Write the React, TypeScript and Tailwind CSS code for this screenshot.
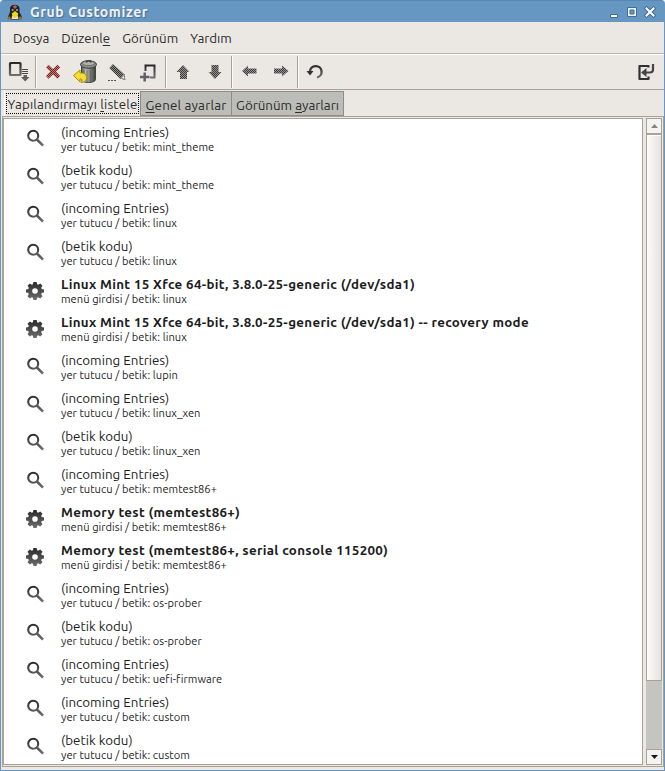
import React from "react";

type Entry = { kind: "placeholder" | "menu"; title: string; script: string };

const entries: Entry[] = [
  { kind: "placeholder", title: "(incoming Entries)", script: "mint_theme" },
  { kind: "placeholder", title: "(betik kodu)", script: "mint_theme" },
  { kind: "placeholder", title: "(incoming Entries)", script: "linux" },
  { kind: "placeholder", title: "(betik kodu)", script: "linux" },
  { kind: "menu", title: "Linux Mint 15 Xfce 64-bit, 3.8.0-25-generic (/dev/sda1)", script: "linux" },
  { kind: "menu", title: "Linux Mint 15 Xfce 64-bit, 3.8.0-25-generic (/dev/sda1) -- recovery mode", script: "linux" },
  { kind: "placeholder", title: "(incoming Entries)", script: "lupin" },
  { kind: "placeholder", title: "(incoming Entries)", script: "linux_xen" },
  { kind: "placeholder", title: "(betik kodu)", script: "linux_xen" },
  { kind: "placeholder", title: "(incoming Entries)", script: "memtest86+" },
  { kind: "menu", title: "Memory test (memtest86+)", script: "memtest86+" },
  { kind: "menu", title: "Memory test (memtest86+, serial console 115200)", script: "memtest86+" },
  { kind: "placeholder", title: "(incoming Entries)", script: "os-prober" },
  { kind: "placeholder", title: "(betik kodu)", script: "os-prober" },
  { kind: "placeholder", title: "(incoming Entries)", script: "uefi-firmware" },
  { kind: "placeholder", title: "(incoming Entries)", script: "custom" },
  { kind: "placeholder", title: "(betik kodu)", script: "custom" },
];

/* Gradients and the stipple mask shared by all icons */
function Defs() {
  return (
    <svg className="absolute h-0 w-0" aria-hidden="true">
      <defs>
        <pattern id="stipple" width="2" height="2" patternUnits="userSpaceOnUse">
          <rect width="2" height="2" fill="#fff" />
          <rect width="1" height="1" fill="#808080" />
          <rect x="1" y="1" width="1" height="1" fill="#808080" />
        </pattern>
        <mask id="insensitive" maskUnits="userSpaceOnUse" x="0" y="0" width="32" height="32">
          <rect width="32" height="32" fill="url(#stipple)" />
        </mask>
        <linearGradient id="dark" x1="0" y1="0" x2="0" y2="1">
          <stop offset="0" stopColor="#2a2a2a" />
          <stop offset="1" stopColor="#6e6e6e" />
        </linearGradient>
        <linearGradient id="glass" gradientUnits="userSpaceOnUse" x1="0" y1="2" x2="0" y2="18">
          <stop offset="0" stopColor="#2c2c2c" />
          <stop offset="1" stopColor="#747474" />
        </linearGradient>
        <linearGradient id="can" x1="0" y1="0" x2="1" y2="0">
          <stop offset="0" stopColor="#555753" />
          <stop offset="0.3" stopColor="#b8bab5" />
          <stop offset="0.65" stopColor="#7a7c77" />
          <stop offset="1" stopColor="#3a3c38" />
        </linearGradient>
      </defs>
    </svg>
  );
}

function Magnifier() {
  return (
    <svg className="h-[18px] w-[18px]" viewBox="0 0 18 18" fill="none" stroke="url(#glass)">
      <circle cx="6.2" cy="6.8" r="5" strokeWidth="2.1" />
      <path d="M10 10.6 L16 16.6" strokeWidth="2.7" />
    </svg>
  );
}

function Gear() {
  return (
    <svg className="h-[18px] w-[18px]" viewBox="0 0 18 18">
      <path
        fill="url(#dark)"
        fillRule="evenodd"
        d="M7.4 0h3.2l.5 2.3 1.1.5 2-1.3 2.3 2.3-1.3 2 .5 1.1L18 7.4v3.2l-2.3.5-.5 1.1 1.3 2-2.3 2.3-2-1.3-1.1.5-.5 2.3H7.4l-.5-2.3-1.1-.5-2 1.3-2.3-2.3 1.3-2-.5-1.1L0 10.6V7.4l2.3-.5.5-1.1-1.3-2 2.3-2.3 2 1.3 1.1-.5zM9 6.2a2.8 2.8 0 1 0 0 5.6 2.8 2.8 0 0 0 0-5.6z"
      />
    </svg>
  );
}

function Tool({ children }: { children: React.ReactNode }) {
  return (
    <button className="flex h-[34px] w-8 shrink-0 items-center justify-center">
      <svg className="h-8 w-8" viewBox="0 0 32 32" fill="none">
        {children}
      </svg>
    </button>
  );
}

function Sep() {
  return <div className="h-8 w-0.5 shrink-0 border-l border-[#aaa297] bg-[#fcfbfa]" />;
}

function Toolbar() {
  return (
    <div className="flex h-[34px] items-center pr-0.5 pl-0.5">
      <Tool>
        <rect x="7" y="7" width="10.5" height="12" rx="0.5" stroke="url(#dark)" strokeWidth="2.2" />
        <path d="M19 13.5h6M19 15.5h6M19 17.5h6" stroke="#4a4a4a" />
        <path d="M20.5 19h3.5v2h2.5l-4.3 4.5-4.2-4.5h2.5z" fill="#606060" />
      </Tool>
      <Sep />
      <Tool>
        <g mask="url(#insensitive)">
          <path d="M9 11.5l2.500-2.700L16 13l4.500-4.200L23.200 11.500l-4.300 4 4.300 4.500-2.700 2.800-4.500-4.300-4.500 4.300L9 20l4.300-4.500z" fill="#801a17" />
        </g>
      </Tool>
      <Tool>
        <path d="M12.500 8v15.500c0 4 14 4 14 0V8z" fill="url(#can)" stroke="#444642" />
        <path d="M15 14v10M18 14v12M21.500 14v12M24.500 13v11" stroke="#5d5f5a" strokeWidth="0.7" />
        <ellipse cx="19.500" cy="8.500" rx="8" ry="3.800" fill="#8a8c87" stroke="#3a3c38" />
        <ellipse cx="19.500" cy="7.300" rx="6" ry="2.300" fill="#b0b2ad" stroke="#666863" strokeWidth="0.8" />
        <path d="M17.500 6.500c0-2.200 4.500-2.200 4.500 0" stroke="#333" strokeWidth="1.4" />
        <path d="M4.500 19.500l6.500-5.500v3c4-.2 6.500 1.200 6.500 4.500 0 3-1.500 4.700-5.500 5 1.500-1.500 1.500-3.500-1-3.800v3.300z" fill="#f6dc35" stroke="#b08f00" />
      </Tool>
      <Tool>
        <g mask="url(#insensitive)">
          <path d="M8.300 12l3.700-4L23.500 18.500l.8 5.500-5.300-1.500z" fill="#333" />
        </g>
        <path d="M20 22l2.800-3.200 1.200 4.900z" fill="#e4e2df" stroke="#777" strokeWidth="0.6" />
        <path d="M7 24.500h8" stroke="#555" strokeDasharray="2 1" />
      </Tool>
      <Tool>
        <path d="M12.500 15V9.500h9v12H17" stroke="url(#dark)" strokeWidth="2" />
        <path d="M7 21h9.500M11.700 16.500v9" stroke="#606060" strokeWidth="2.5" />
      </Tool>
      <Sep />
      <Tool>
        <g mask="url(#insensitive)">
          <path d="M16 9l6.500 7h-2.500v7h-7v-7h-3.500z" fill="#3c3c3c" />
        </g>
      </Tool>
      <Tool>
        <g mask="url(#insensitive)">
          <path d="M16 23l6.500-7h-3V9h-7v7h-3z" fill="#3c3c3c" />
        </g>
      </Tool>
      <Sep />
      <Tool>
        <g mask="url(#insensitive)">
          <path d="M9 15l6-5.500v3h8.500v5H15v3z" fill="#3c3c3c" />
        </g>
      </Tool>
      <Tool>
        <g mask="url(#insensitive)">
          <path d="M23.500 15l-6.500-5.500v3H9v5h8v3z" fill="#3c3c3c" />
        </g>
      </Tool>
      <Sep />
      <Tool>
        <path d="M11 15.500a5.800 5.800 0 1 1 7 6" stroke="url(#dark)" strokeWidth="2.3" />
        <path d="M7.500 15h7L11 19.500z" fill="#333" />
      </Tool>
      <div className="grow" />
      <Tool>
        <path d="M18.500 11.500V10H9.500v13h9v-2.500" stroke="#303030" strokeWidth="2.2" strokeLinejoin="round" />
        <path d="M23 8v5.500c0 2-1 3-3 3h-4" stroke="#444" strokeWidth="2.2" />
        <path d="M11 16.500l5.500-4.500v9z" fill="#444" />
      </Tool>
    </div>
  );
}

function TitleBar() {
  return (
    <div className="flex h-[22px] shrink-0 items-center rounded-t-[4px] border-t border-[#5788b2] bg-[#6597c2] pr-2 pl-[7px]">
      <svg className="h-4 w-4" viewBox="0 0 16 16">
        <path d="M3 8V4.500C3-.5 12.500-.5 12.500 4.500V8l2.500 5-2 2.500H3L1 13z" fill="#232323" />
        <path d="M6 2.500l2-1.500 2 1.500-1 2H7z" fill="#c0604c" />
        <circle cx="5.700" cy="6" r="1.100" fill="#a5a7a8" />
        <circle cx="10" cy="6" r="1.100" fill="#a5a7a8" />
        <path d="M5 12h6l.5 3h-7z" fill="#e4e0cf" />
        <path d="M4.800 9.500L8 7l3.200 2.500-.7 3L8 14l-2.500-1.500z" fill="#ecd91a" />
        <path d="M0 14l2.500-2 2 3.500H1zM15.500 14L13 12l-2 3.500h4z" fill="#8c713e" />
      </svg>
      <h1 className="ml-[7px] text-[14px] leading-5 font-bold tracking-[0.57px] whitespace-nowrap text-[#f2f1ef] [text-shadow:1px_1px_1px_#456f96]">
        Grub Customizer
      </h1>
      <div className="grow" />
      <svg className="h-3 w-12" viewBox="0 0 48 12">
        <path d="M1.500 8.500h7v3h-7z" fill="#fff" stroke="#3f6d96" />
        <path d="M18.500 1.500h9v9h-9z" fill="#f2f1ef" stroke="#3f6d96" />
        <path d="M21 4h4v4h-4z" fill="#6597c2" stroke="#3f6d96" />
        <path d="M37.500 2.500l7 7m0-7l-7 7" stroke="#3f6d96" strokeWidth="4" strokeLinecap="square" />
        <path d="M37.500 2.500l7 7m0-7l-7 7" stroke="#fff" strokeWidth="2" strokeLinecap="square" />
      </svg>
    </div>
  );
}

function ScrollBar() {
  return (
    <div className="flex w-4 shrink-0 flex-col bg-[#c4c4c1]">
      <div className="flex h-4 items-center justify-center border border-[#aaa297] bg-[#f5f3f1]">
        <svg className="h-1 w-[7px]" viewBox="0 0 7 4"><path d="M3.500 0L7 4H0z" fill="#85837f" /></svg>
      </div>
      <div className="h-[547px] border border-[#aaa297] bg-linear-to-r from-[#fbfbfa] to-[#e6e3df] shadow-[inset_1px_1px_0_#fff]" />
      <div className="grow" />
      <div className="flex h-4 items-center justify-center border border-[#aaa297] bg-[#f5f3f1]">
        <svg className="h-1 w-[7px]" viewBox="0 0 7 4"><path d="M0 0h7L3.500 4z" fill="#1a1a1a" /></svg>
      </div>
    </div>
  );
}

function Row({ entry }: { entry: Entry }) {
  const isMenu = entry.kind === "menu";
  return (
    <li className="flex h-[38px]">
      <div className={isMenu ? "ml-[22px] w-[35px] shrink-0 pt-[11px]" : "ml-[23px] w-[34px] shrink-0 pt-[10px]"}>
        {isMenu ? <Gear /> : <Magnifier />}
      </div>
      <div className="pt-[5px] whitespace-nowrap text-[#1c1c1c]">
        <div
          className={
            isMenu
              ? "text-[13.33px] leading-[17px] font-bold tracking-[0.33px]"
              : "text-[13.33px] leading-[17px] tracking-[0.02px]"
          }
        >
          {entry.title}
        </div>
        <div className="text-[11.1px] leading-[13px] tracking-[0.05px]">
          {isMenu ? "menü girdisi" : "yer tutucu"} / betik: {entry.script}
        </div>
      </div>
    </li>
  );
}

export default function App() {
  return (
    <div className="h-[771px] w-[665px] overflow-hidden bg-white font-['Ubuntu','Noto_Sans',sans-serif] text-[#2b2b2b]">
      <Defs />
      <div className="flex h-full flex-col">
        <TitleBar />
        <div className="flex min-h-0 grow flex-col border-x border-b border-[#6597c2] bg-[#ebe8e4]">
          <nav className="flex h-8 shrink-0 items-center gap-3 border-b border-[#bcb5ac] pt-0.5 pl-3 text-[13.33px] whitespace-nowrap">
            <span>Dosya</span>
            <span>Düzenl<u className="underline-offset-2">e</u></span>
            <span>Görünüm</span>
            <span>Yardım</span>
          </nav>
          <div className="shrink-0 border-t border-b border-t-white border-b-[#aaa297]">
            <Toolbar />
          </div>
          <div className="flex h-[26px] shrink-0 items-end pl-[3px] text-[13.33px] whitespace-nowrap">
            <div className="flex h-[26px] w-[136px] items-center justify-center border-l border-white">
              <span className="flex h-[21px] w-[133px] items-center justify-center border border-dotted border-black pt-1 tracking-[0.17px]">
                <span>Yapılandırmayı <u className="underline-offset-2">l</u>istele</span>
              </span>
            </div>
            <div className="flex h-[25px] w-[92px] items-center justify-center border border-[#8f8c85] bg-[#bcbdb8] pt-[5px] tracking-[0.2px]">
              <span><u className="underline-offset-2">G</u>enel ayarlar</span>
            </div>
            <div className="flex h-[25px] w-[112px] items-center justify-center border border-l-0 border-[#8f8c85] bg-[#bcbdb8] pt-[5px]">
              <span>Görünüm <u className="underline-offset-2">a</u>yarları</span>
            </div>
          </div>
          <div className="mb-[3px] ml-px flex min-h-0 grow border border-[#aaa297] pt-px pr-px pb-px">
            <ul className="min-h-0 grow overflow-hidden border border-[#aaa297] bg-white">
              {entries.map((e, i) => <Row key={i} entry={e} />)}
            </ul>
            <div className="w-[3px] shrink-0" />
            <ScrollBar />
          </div>
        </div>
      </div>
    </div>
  );
}
